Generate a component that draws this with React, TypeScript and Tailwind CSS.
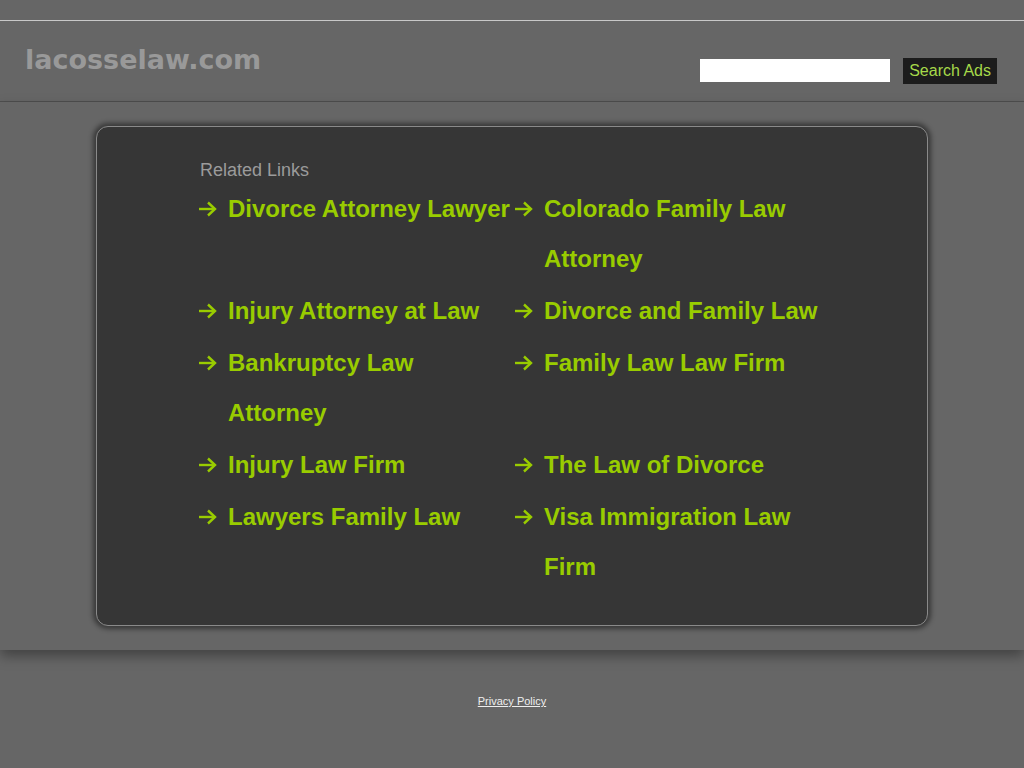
import { useState } from 'react'

const links = [
  'Divorce Attorney Lawyer',
  'Colorado Family Law Attorney',
  'Injury Attorney at Law',
  'Divorce and Family Law',
  'Bankruptcy Law Attorney',
  'Family Law Law Firm',
  'Injury Law Firm',
  'The Law of Divorce',
  'Lawyers Family Law',
  'Visa Immigration Law Firm',
]

function Arrow() {
  return (
    <svg width="19" height="16" viewBox="0 0 19 16" className="mt-[17px] shrink-0" fill="none" stroke="#99cc00" strokeWidth="2.4">
      <path d="M1 8h16" />
      <path d="M10 1.5l7 6.5-7 6.5" />
    </svg>
  )
}

function LinkItem({ text }: { text: string }) {
  return (
    <li className="mb-[2px] flex leading-[50px]">
      <span className="flex w-[30px] shrink-0">
        <Arrow />
      </span>
      <a href="#" className="hover:underline">
        {text}
      </a>
    </li>
  )
}

export default function App() {
  const [q, setQ] = useState('')
  return (
    <div className="min-h-[768px] bg-[#666666] font-['Liberation_Sans',Arial,sans-serif]">
      <div className="h-5" />
      <header className="flex h-[82px] items-start justify-between border-t border-b border-t-[#c8c8c8] border-b-[#4f4f4f] px-[25px]">
        <h1 className="mt-[20px] font-['DejaVu_Sans',sans-serif] text-[27px] font-bold leading-[38px] text-[#999999]">
          lacosselaw.com
        </h1>
        <form className="mt-[37px] flex items-start gap-[13px] pr-[2px]" onSubmit={(e) => e.preventDefault()}>
          <input
            value={q}
            onChange={(e) => setQ(e.target.value)}
            className="mt-[1px] h-[23px] w-[190px] bg-white px-1 text-sm text-black outline-none"
          />
          <button className="h-[26px] bg-[#1c1c1c] px-[6px] text-[16px] leading-[26px] text-[#a6d94a]">
            Search Ads
          </button>
        </form>
      </header>
      <main className="pt-6 pb-6 shadow-[0_6px_12px_rgba(0,0,0,0.35)]">
        <div className="mx-auto w-[832px] rounded-[12px] border border-[#8a8a8a] bg-[#363636] pt-[32px] pb-[31px] shadow-[0_0_5px_3px_rgba(0,0,0,0.45)]">
          <div className="mx-auto w-[632px] pl-[2px]">
            <h2 className="mb-[3px] pl-[2px] text-[18px] leading-[22px] text-[#9b9b9b]">Related Links</h2>
            <ul className="grid grid-cols-[316px_316px] text-[24px] font-bold text-[#99cc00]">
              {links.map((t) => (
                <LinkItem key={t} text={t} />
              ))}
            </ul>
          </div>
        </div>
      </main>
      <footer className="pt-[38px] text-center">
        <a href="#" className="text-[11px] text-[#eeeeee] underline">
          Privacy Policy
        </a>
      </footer>
    </div>
  )
}
